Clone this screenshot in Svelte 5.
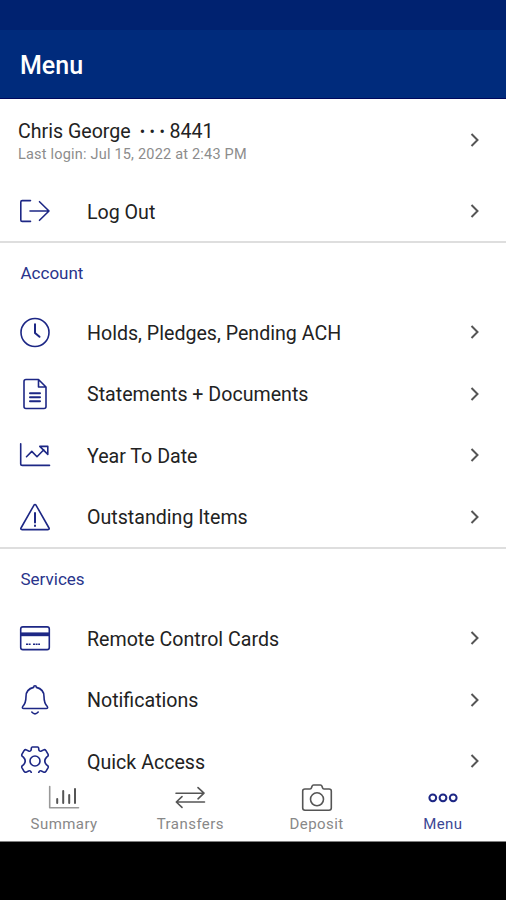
<script>
  const account = [
    { icon: 'clock', label: 'Holds, Pledges, Pending ACH' },
    { icon: 'document', label: 'Statements + Documents' },
    { icon: 'trend', label: 'Year To Date' },
    { icon: 'warning', label: 'Outstanding Items' }
  ];
  const services = [
    { icon: 'card', label: 'Remote Control Cards' },
    { icon: 'bell', label: 'Notifications' },
    { icon: 'gear', label: 'Quick Access' }
  ];
  const tabs = [
    { icon: 'bars', label: 'Summary' },
    { icon: 'swap', label: 'Transfers' },
    { icon: 'camera', label: 'Deposit' },
    { icon: 'dots', label: 'Menu', active: true }
  ];
</script>

{#snippet glyph(name)}
  <svg class="glyph" viewBox="0 0 32 32" aria-hidden="true">
    {#if name === 'logout'}
      <path d="M11.5 5.6H3.2Q1.8 5.6 1.8 7V25Q1.8 26.4 3.2 26.4H11.5M11 16H30M20.5 6.7L30 16L20.5 25.3" />
    {:else if name === 'clock'}
      <circle cx="16" cy="16.5" r="14" />
      <path class="bold" d="M16 8.3V17L20.5 20.8" />
    {:else if name === 'document'}
      <path d="M7 1.5H19.5L27 9V28.5Q27 30.5 25 30.5H7Q5 30.5 5 28.5V3.5Q5 1.5 7 1.5ZM19.5 1.5V9H27" />
      <path class="bold" d="M11 15.2H21M11 19.2H21M11 23.3H21" />
    {:else if name === 'trend'}
      <path d="M1.7 4.7V24.7Q1.7 26.4 3.4 26.4H30.5M7.5 17.7L12.8 12.4L18 17.7L24.8 10.8M20.8 7.4H28.8V15.4Z" />
    {:else if name === 'warning'}
      <path d="M14.9 4.3Q16 2.6 17.1 4.3L30 27Q30.7 28.6 29 28.6H3Q1.3 28.6 2 27Z" />
      <path class="bold" d="M16 12V21.5M16 24.4V25" />
    {:else if name === 'card'}
      <rect x="1.7" y="4.9" width="28.6" height="22.7" rx="2.2" />
      <path class="stripe" d="M2 12.3H30" />
      <path class="digits" d="M7 22.3H12M14 22.3H21" />
    {:else if name === 'bell'}
      <path d="M14.6 3.4Q14.6 1.8 16 1.8T17.4 3.4C22.3 4.6 25 8 25 12.5C25 18 26 20.2 28.3 22.5Q29.3 24.5 27.3 24.5H4.7Q2.7 24.5 3.7 22.5C6 20.2 7 18 7 12.5C7 8 9.7 4.6 14.6 3.4ZM12.8 28Q16 31.7 19.2 28" />
    {:else if name === 'gear'}
      <circle cx="16" cy="16" r="5" />
      <path d="M13.4 2H18.6Q19.5 2 19.7 3.2V4.2Q20 6.8 22.4 6L24.6 4.9Q25.9 4.3 26.8 5.4L29 9.2Q29.7 10.6 28.5 11.5L27.6 12.1Q24 16 27.6 19.9L28.5 20.5Q29.7 21.4 29 22.8L26.8 26.6Q25.9 27.7 24.6 27.1L22.4 26Q20 25.2 19.7 27.8V28.8Q19.5 30 18.6 30H13.4Q12.5 30 12.3 28.8V27.8Q12 25.2 9.6 26L7.4 27.1Q6.1 27.7 5.2 26.6L3 22.8Q2.3 21.4 3.5 20.5L4.4 19.9Q8 16 4.4 12.1L3.5 11.5Q2.3 10.6 3 9.2L5.2 5.4Q6.1 4.3 7.4 4.9L9.6 6Q12 6.8 12.3 4.2V3.2Q12.5 2 13.4 2Z" />
    {:else if name === 'bars'}
      <path class="soft" d="M1.7 4.5V25.7H30.5" />
      <path class="bold" d="M9.2 17V21M15.2 9V21M21.2 13V21M27 7V21" />
    {:else if name === 'swap'}
      <path d="M2 11.2H29.5M24 5.6L30 11.2L24 16.8" />
      <path d="M30.5 20H3M8 14.6L2.3 20L8 25.4" />
    {:else if name === 'camera'}
      <path d="M4 7H9Q10.2 7 10.5 5.8L11 4.2Q11.4 3 12.6 3H19.4Q20.6 3 21 4.2L21.5 5.8Q21.8 7 23 7H28Q30.3 7 30.3 9V26Q30.3 28.2 28 28.2H4Q1.7 28.2 1.7 26V9Q1.7 7 4 7Z" />
      <circle cx="16" cy="17.3" r="6.5" />
    {:else if name === 'dots'}
      <g class="bold"><circle cx="5.8" cy="15.8" r="3.4" /><circle cx="16" cy="15.8" r="3.4" /><circle cx="26.2" cy="15.8" r="3.4" /></g>
    {/if}
  </svg>
{/snippet}

{#snippet chevron()}
  <svg class="chevron" viewBox="0 0 10 16" aria-hidden="true"><path d="M1.5 2L7.5 8L1.5 14" /></svg>
{/snippet}

{#snippet row(item)}
  <div class="row">
    {@render glyph(item.icon)}
    <span class="label">{item.label}</span>
    {@render chevron()}
  </div>
{/snippet}

<div class="screen">
  <div class="status"></div>
  <header>Menu</header>
  <main>
    <div class="profile">
      <div>
        <div class="name"><span>Chris George</span><span class="mask">•••</span><span>8441</span></div>
        <div class="login">Last login: Jul 15, 2022 at 2:43 PM</div>
      </div>
      {@render chevron()}
    </div>
    {@render row({ icon: 'logout', label: 'Log Out' })}
    <section>
      <h2>Account</h2>
      {#each account as item}{@render row(item)}{/each}
    </section>
    <section>
      <h2>Services</h2>
      {#each services as item}{@render row(item)}{/each}
    </section>
  </main>
  <nav>
    {#each tabs as tab}
      <div class="tab" class:active={tab.active}>
        {@render glyph(tab.icon)}
        <span>{tab.label}</span>
      </div>
    {/each}
  </nav>
  <div class="system"></div>
</div>

<style>
  .screen {
    width: 506px;
    height: 900px;
    display: flex;
    flex-direction: column;
    overflow: hidden;
    background: #fff;
    color: #222;
    font-family: Roboto, "Liberation Sans", sans-serif;
  }
  .status { height: 30px; flex: none; background: #002270; }
  header {
    height: 69px;
    flex: none;
    box-sizing: border-box;
    padding: 3px 20px 0;
    display: flex;
    align-items: center;
    background: #002b7c;
    border-bottom: 1px solid #00085c;
    color: #fff;
    font-size: 25px;
    font-weight: 500;
  }
  main { height: 674px; flex: none; overflow: hidden; }
  .profile {
    height: 82px;
    box-sizing: border-box;
    padding: 0 26px 0 18px;
    display: flex;
    align-items: center;
    justify-content: space-between;
  }
  .name { display: flex; font-size: 19.6px; line-height: 24px; padding-top: 6px; }
  .mask { margin: 0 0 0 9px; font-size: 16px; letter-spacing: 4.5px; }
  .login { font-size: 14.5px; line-height: 22px; letter-spacing: 0.2px; color: #8c8c8c; }
  .row {
    height: 61.4px;
    box-sizing: border-box;
    padding: 0 26px 1.5px 19px;
    display: flex;
    align-items: center;
  }
  .label { flex: 1; margin-left: 36px; font-size: 19.62px; padding-top: 2.5px; }
  section { border-top: 2px solid #dedede; height: 306px; box-sizing: border-box; margin-top: -1px; }
  section + section { margin-top: 0; }
  h2 {
    margin: 0;
    height: 59px;
    padding-left: 20.5px;
    display: flex;
    align-items: center;
    font-size: 17px;
    font-weight: 400;
    color: #29348b;
  }
  .glyph {
    width: 32px;
    height: 32px;
    flex: none;
    fill: none;
    stroke: #1d2785;
    stroke-width: 1.6;
    stroke-linecap: round;
    stroke-linejoin: round;
  }
  .bold { stroke-width: 2; }
  .stripe { stroke-width: 3.8; stroke-linecap: butt; }
  .digits { stroke-width: 1.4; stroke-dasharray: 2 0.6; stroke-linecap: butt; }
  .chevron {
    width: 10px;
    height: 16px;
    flex: none;
    fill: none;
    stroke: #555;
    stroke-width: 2;
  }
  nav {
    height: 69px;
    flex: none;
    box-sizing: border-box;
    border-bottom: 1px solid #808080;
    padding-left: 1px;
    display: flex;
    background: #fff;
  }
  .tab {
    flex: 1;
    padding-top: 8.5px;
    display: flex;
    flex-direction: column;
    align-items: center;
    font-size: 15px;
    line-height: 20px;
    letter-spacing: 0.45px;
    color: #888;
  }
  .tab span { margin-top: 0.5px; }
  .tab .glyph { stroke: #555; }
  .tab .soft { stroke: #999; }
  .tab.active { color: #3c4795; }
  .tab.active .glyph { stroke: #1d2785; }
  .system { flex: 1; background: #000; }
</style>
